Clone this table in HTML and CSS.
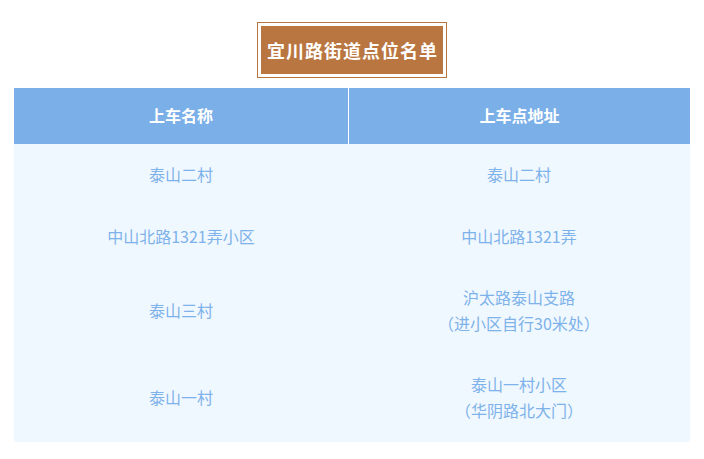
FILE: index.html
```html
<!DOCTYPE html>
<html lang="zh-CN">
<head>
<meta charset="utf-8">
<link rel="stylesheet" href="styles.css">
</head>
<body>
<div class="page">
  <div class="title-wrap">
    <div class="title-frame">
      <div class="title">宜川路街道点位名单</div>
    </div>
  </div>
  <div class="table">
    <div class="th">上车名称</div>
    <div class="th th-right">上车点地址</div>

    <div class="td">泰山二村</div>
    <div class="td">泰山二村</div>

    <div class="td">中山北路1321弄小区</div>
    <div class="td">中山北路1321弄</div>

    <div class="td">泰山三村</div>
    <div class="td">沪太路泰山支路<br>（进小区自行30米处）</div>

    <div class="td">泰山一村</div>
    <div class="td">泰山一村小区<br>（华阴路北大门）</div>
  </div>
</div>
</body>
</html>
```

FILE: styles.css
```css
html, body {
  margin: 0;
  padding: 0;
  background: #ffffff;
}
body {
  font-family: "Noto Sans CJK SC", "Noto Sans", "Liberation Sans", sans-serif;
  text-spacing-trim: space-all;
}
.page {
  padding: 22px 14px 0 14px;
}
.title-wrap {
  display: flex;
  justify-content: center;
  margin-bottom: 10px;
}
.title-frame {
  border: 1px solid #ba7640;
  padding: 3px;
}
.title {
  background: #ba7640;
  color: #ffffff;
  font-weight: bold;
  font-size: 18px;
  letter-spacing: 1px;
  line-height: 48px;
  height: 48px;
  padding: 0 5px 0 6px;
  white-space: nowrap;
}
.table {
  display: grid;
  grid-template-columns: 334px 342px;
  background: #f0f8ff;
}
.th {
  background: #7bafe8;
  color: #ffffff;
  font-weight: bold;
  font-size: 16px;
  line-height: 25.6px;
  padding: 15.2px 0;
  text-align: center;
}
.th-right {
  border-left: 1px solid #ffffff;
}
.td {
  color: #7eb2ea;
  font-size: 16px;
  line-height: 25.6px;
  padding: 18px 0;
  text-align: center;
  display: flex;
  flex-direction: column;
  justify-content: center;
}
```
